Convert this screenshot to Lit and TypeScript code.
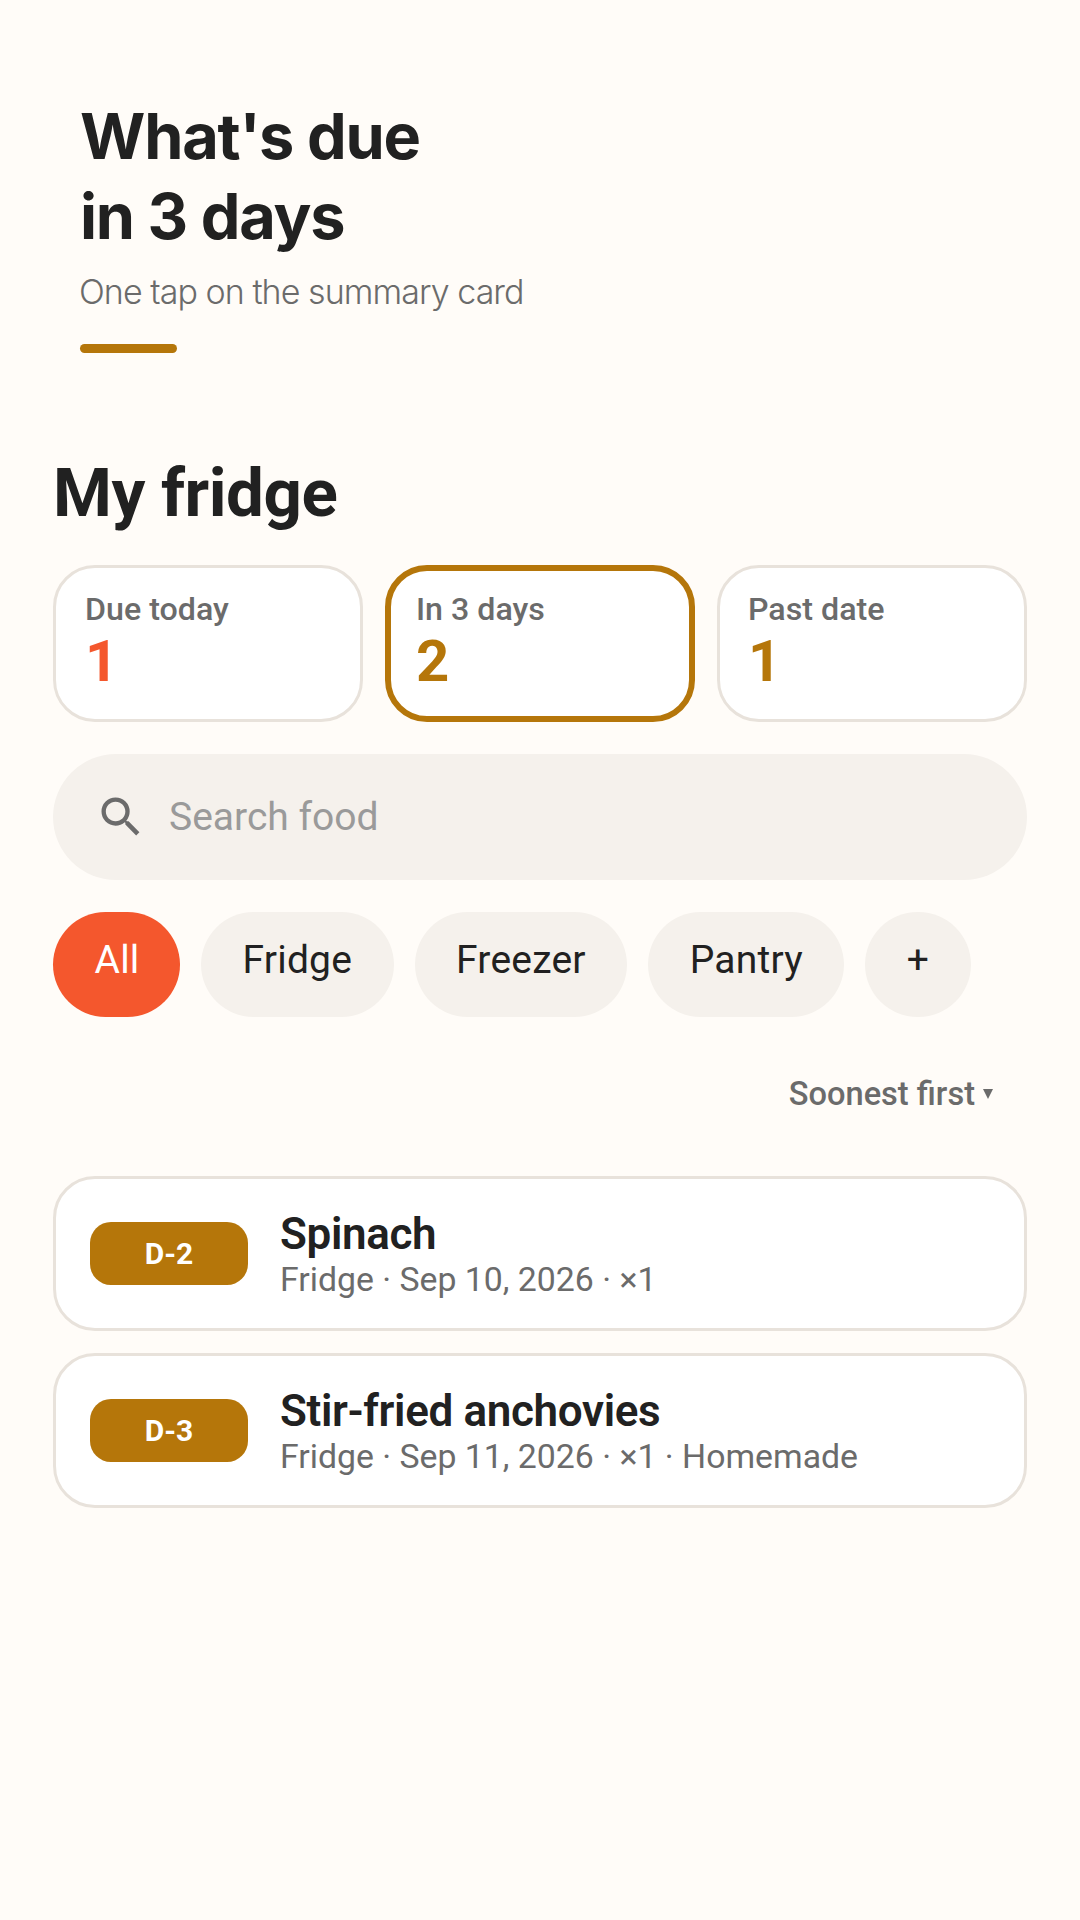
import { LitElement, html, css } from "lit";
import { customElement } from "lit/decorators.js";

@customElement("app-root")
export class AppRoot extends LitElement {
  static styles = css`
    :host { display: block; min-height: 1920px; background: #fffcf8; font-family: Roboto, sans-serif; color: #212121; }
    .head { padding: 96px 80px 0; }
    h1 { margin: 0; font: 700 63px/80px Inter, sans-serif; letter-spacing: -1.2px; }
    .sub { margin: 14px 0 0 -1px; font: 300 34px/44px Inter, sans-serif; letter-spacing: -0.95px; color: #6b6b6b; }
    .rule { margin-top: 30px; width: 97px; height: 9px; border-radius: 4.5px; background: #b5760a; }
    .main { padding: 0 53px; }
    h2 { margin: 0; padding-top: 98px; font: 700 67.3px/84px Roboto, sans-serif; letter-spacing: -0.5px; }
    .stats { display: grid; grid-template-columns: repeat(3, 1fr); gap: 22px; margin-top: 30px; }
    .stat { box-sizing: border-box; height: 157px; border: 3px solid #e8e2db; border-radius: 42px; background: #fff; padding: 23px 29px; }
    .stat:last-child { padding-left: 28px; }
    .stat.on { border: 6px solid #b5760a; padding: 20px 25px; }
    .lab { font: 500 32.2px/36px Roboto, sans-serif; color: #6b6b6b; }
    .num { font: 700 58px/68px Roboto, sans-serif; }
    .red { color: #f4572d; }
    .amb { color: #b5760a; }
    .search { display: flex; align-items: center; gap: 22px; height: 126px; margin-top: 32px; padding: 0 42px; border-radius: 63px; background: #f5f1ec; font-size: 39px; color: #9a9a9a; }
    .search svg { width: 52px; height: 52px; flex: none; }
    .chips { display: flex; gap: 21px; margin-top: 32px; }
    .chip { height: 105px; padding: 0 41.5px 10px; border-radius: 52.5px; background: #f5f1ec; font-size: 39px; letter-spacing: 0.2px; display: flex; align-items: center; box-sizing: border-box; }
    .chip.on { background: #f4572d; color: #fff; padding: 0 40.5px 10px 41.5px; }
    .sort { display: flex; justify-content: flex-end; align-items: center; gap: 8px; margin-top: 59px; padding-right: 34px; height: 36px; font: 500 32.6px/36px Roboto, sans-serif; color: #6b6b6b; }
    .caret { width: 0; height: 0; border-left: 5px solid transparent; border-right: 5px solid transparent; border-top: 10px solid #6b6b6b; }
    .list { display: flex; flex-direction: column; gap: 22px; margin-top: 64px; }
    .item { display: flex; align-items: center; gap: 32px; box-sizing: border-box; height: 155px; padding: 0 34px; border: 3px solid #e8e2db; border-radius: 42px; background: #fff; }
    .badge { flex: none; width: 158px; height: 63px; border-radius: 21px; background: #b5760a; color: #fff; font: 700 30px/63px Roboto, sans-serif; text-align: center; }
    .text { padding-top: 3px; }
    .name { font: 600 44px/50px Roboto, sans-serif; letter-spacing: -0.35px; }
    .meta { font: 400 33.8px/42px Roboto, sans-serif; color: #6b6b6b; }
  `;

  render() {
    const stats = [
      { l: "Due today", n: "1", c: "red", on: false },
      { l: "In 3 days", n: "2", c: "amb", on: true },
      { l: "Past date", n: "1", c: "amb", on: false },
    ];
    const chips = ["All", "Fridge", "Freezer", "Pantry", "+"];
    const items = [
      { b: "D-2", n: "Spinach", m: "Fridge · Sep 10, 2026 · ×1" },
      { b: "D-3", n: "Stir-fried anchovies", m: "Fridge · Sep 11, 2026 · ×1 · Homemade" },
    ];
    return html`
      <div class="head">
        <h1>What's due<br />in 3 days</h1>
        <div class="sub">One tap on the summary card</div>
        <div class="rule"></div>
      </div>
      <div class="main">
        <h2>My fridge</h2>
        <div class="stats">
          ${stats.map((s) => html`<div class="stat ${s.on ? "on" : ""}"><div class="lab">${s.l}</div><div class="num ${s.c}">${s.n}</div></div>`)}
        </div>
        <div class="search">
          <svg viewBox="0 0 24 24" fill="#6b6b6b"><path d="M15.5 14h-.79l-.28-.27A6.47 6.47 0 0 0 16 9.5 6.5 6.5 0 1 0 9.5 16c1.61 0 3.09-.59 4.23-1.57l.27.28v.79l5 4.99L20.49 19l-4.99-5zm-6 0C7.01 14 5 11.99 5 9.5S7.01 5 9.5 5 14 7.01 14 9.5 11.99 14 9.5 14z"/></svg>
          <span>Search food</span>
        </div>
        <div class="chips">
          ${chips.map((c, i) => html`<div class="chip ${i === 0 ? "on" : ""}">${c}</div>`)}
        </div>
        <div class="sort"><span>Soonest first</span><span class="caret"></span></div>
        <div class="list">
          ${items.map((it) => html`<div class="item"><div class="badge">${it.b}</div><div class="text"><div class="name">${it.n}</div><div class="meta">${it.m}</div></div></div>`)}
        </div>
      </div>
    `;
  }
}
